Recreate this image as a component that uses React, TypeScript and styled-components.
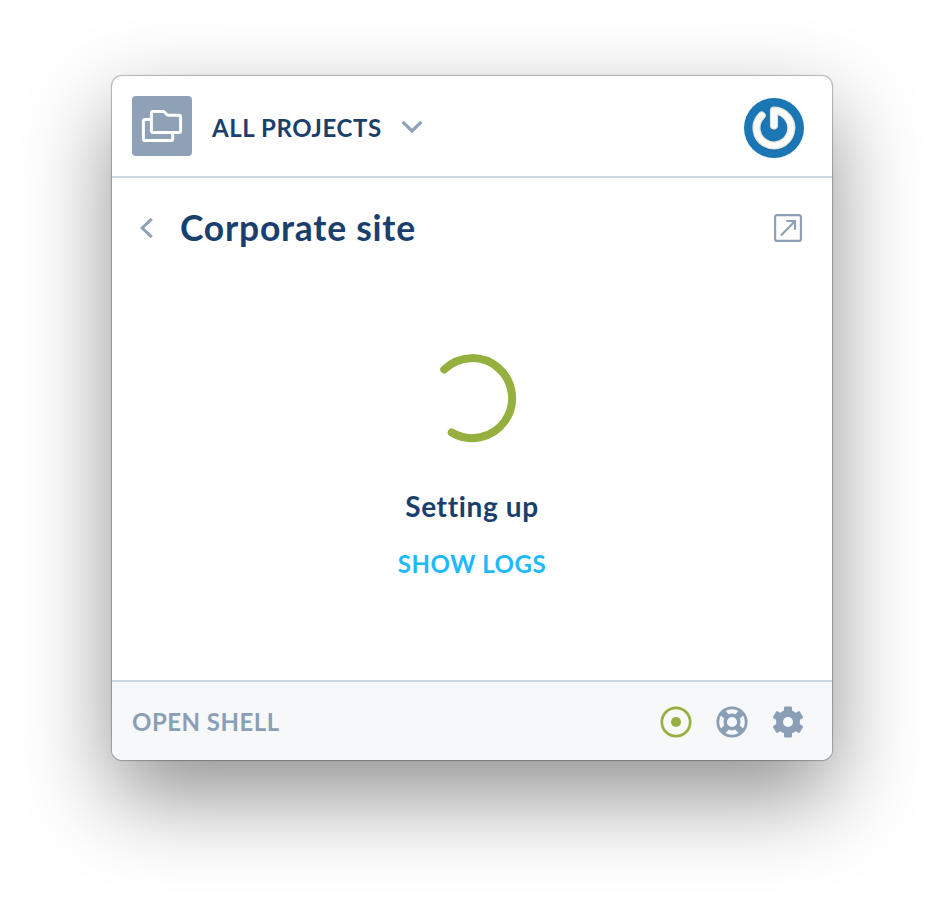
import React from "react";
import styled, { createGlobalStyle } from "styled-components";

const navy = "#1a3f6c";
const slate = "#8fa1b6";
const green = "#96b03f";

const GlobalStyle = createGlobalStyle`
  * { box-sizing: border-box; }
  html, body { margin: 0; height: 100%; background: #fff; }
  body { font-family: Lato, "Open Sans", sans-serif; overflow: hidden; }
  svg { display: block; flex: none; }
`;

const Page = styled.div`
  height: 908px;
  width: 944px;
  padding: 76px 112px 148px;
`;

const Window = styled.main`
  height: 684px;
  display: flex;
  flex-direction: column;
  background: #fff;
  border-radius: 10px;
  overflow: hidden;
  box-shadow: 0 0 1px 1px rgba(0, 0, 0, 0.26), 0 36px 88px rgba(0, 0, 0, 0.44);
`;

const Header = styled.header`
  height: 102px;
  flex: none;
  display: flex;
  align-items: flex-start;
  padding: 20px 28px 0 20px;
  border-bottom: 2px solid #ced5e2;
`;

const ProjectTile = styled.div`
  width: 60px;
  height: 60px;
  border-radius: 4px;
  background: ${slate};
`;

const Label = styled.span<{ $size: number; $spacing: number; $color: string }>`
  font-size: ${(p) => p.$size}px;
  letter-spacing: ${(p) => p.$spacing}px;
  color: ${(p) => p.$color};
  font-weight: 700;
  line-height: 32px;
  white-space: nowrap;
`;

const Switcher = styled.button`
  display: flex;
  align-items: center;
  gap: 19px;
  margin: 16px auto 0 20px;
  padding: 0;
  border: 0;
  background: none;
  font-family: inherit;

  svg {
    margin-bottom: 3px;
  }
`;

const Avatar = styled.div`
  margin-top: 2px;
`;

const Content = styled.section`
  flex: 1;
  display: flex;
  flex-direction: column;
  align-items: center;
`;

const TitleRow = styled.div`
  width: 100%;
  height: 100px;
  display: flex;
  align-items: center;
  padding: 0 30px 0 27px;
`;

const Title = styled.h1`
  margin: 0 auto 0 26px;
  font-size: 35.5px;
  line-height: 44px;
  font-weight: 700;
  letter-spacing: 0.75px;
  color: ${navy};
`;

const Status = styled.div`
  display: flex;
  flex-direction: column;
  align-items: center;
  padding-top: 72px;
`;

const StatusText = styled.div`
  display: flex;
  flex-direction: column;
  align-items: center;
  gap: 26px;
  margin-top: 44px;
`;

const Footer = styled.footer`
  height: 80px;
  flex: none;
  display: flex;
  align-items: center;
  justify-content: space-between;
  padding: 2px 28px 0 20px;
  border-top: 2px solid #ced5e2;
  background: #f6f8fa;
`;

const Tools = styled.div`
  display: flex;
  gap: 24px;
`;

const FoldersIcon = () => (
  <svg width="60" height="60" fill="none" stroke="#fff" strokeWidth="3" strokeLinejoin="round">
    <path d="M19 23.4H13q-1.6 0-1.6 1.6V43q0 1.6 1.6 1.6H39q1.7 0 1.7-1.6V37" />
    <path d="M19.4 17q0-1.6 1.6-1.6H31q.8 0 1.4.6l2.6 2.7q.6.6 1.4.6H47q1.6 0 1.6 1.6V34.8q0 1.6-1.6 1.6H21q-1.6 0-1.6-1.6Z" />
  </svg>
);

const powerPath = "M-12.3-12.4A17.4 17.4 0 1 0 0-17.4V-2.4";

const PowerAvatar = () => (
  <svg width="60" height="60" viewBox="-30 -30 60 60" fill="none">
    <circle r="30" fill="#1a76b5" />
    <g strokeWidth="8.2" strokeLinecap="round" strokeLinejoin="round">
      <path d={powerPath} stroke="#0f5c92" transform="translate(.4 .8)" opacity=".6" />
      <path d={powerPath} stroke="#dfe2dc" />
      <path d={powerPath} stroke="#fbfbf8" strokeWidth="5.8" />
    </g>
  </svg>
);

const LifeRing = () => (
  <svg width="32" height="32" viewBox="-16 -16 32 32" fill="none" stroke="#8a9fb5">
    <circle r="14.2" strokeWidth="2.8" />
    <circle r="6.8" strokeWidth="3.4" />
    <path d="M-10-10-5.5-5.5M10-10 5.5-5.5M-10 10-5.5 5.5M10 10 5.5 5.5" strokeWidth="6.4" />
  </svg>
);

const Gear = () => (
  <svg width="32" height="32" viewBox="-16 -16 32 32">
    <g fill="#8a9fb5">
      {[0, 60, 120].map((angle) => (
        <rect key={angle} x="-4" y="-15.5" width="8" height="31" rx="1" transform={`rotate(${angle})`} />
      ))}
    </g>
    <circle r="8.4" fill="none" stroke="#8a9fb5" strokeWidth="7" />
    <circle r="5" fill="#f6f8fa" />
  </svg>
);

export default function App() {
  return (
    <Page>
      <GlobalStyle />
      <Window>
        <Header>
          <ProjectTile><FoldersIcon /></ProjectTile>
          <Switcher>
            <Label $size={24} $spacing={0.6} $color={navy}>ALL PROJECTS</Label>
            <svg width="22" height="14" fill="none" stroke={slate} strokeWidth="3.2">
              <path d="M1.6 1.8 11 11 20.4 1.8" />
            </svg>
          </Switcher>
          <Avatar><PowerAvatar /></Avatar>
        </Header>
        <Content>
          <TitleRow>
            <svg width="15" height="22" fill="none" stroke={slate} strokeWidth="3">
              <path d="M12.8 1.8 3.2 11 12.8 20.2" />
            </svg>
            <Title>Corporate site</Title>
            <svg width="28" height="28" fill="none" stroke={slate} strokeWidth="2.2">
              <rect x="1.1" y="1.1" width="25.8" height="25.8" rx="2" />
              <path d="M7 21.5 20.8 7.2M12.3 7H21V15.7" />
            </svg>
          </TitleRow>
          <Status>
            <svg width="96" height="96" viewBox="-48 -48 96 96" fill="none" stroke={green} strokeWidth="8" strokeLinecap="round">
              <path d="M-27.7-28.6A40 40 0 1 1-20.3 34.5" />
            </svg>
            <StatusText>
              <Label $size={28} $spacing={0.65} $color={navy}>Setting up</Label>
              <Label $size={24} $spacing={0.55} $color="#20b9fc">SHOW LOGS</Label>
            </StatusText>
          </Status>
        </Content>
        <Footer>
          <Label $size={24} $spacing={0.5} $color="#8a9fb5">OPEN SHELL</Label>
          <Tools>
            <svg width="32" height="32" viewBox="-16 -16 32 32">
              <circle r="14.2" fill="none" stroke={green} strokeWidth="2.7" />
              <circle r="5" fill={green} />
            </svg>
            <LifeRing />
            <Gear />
          </Tools>
        </Footer>
      </Window>
    </Page>
  );
}
